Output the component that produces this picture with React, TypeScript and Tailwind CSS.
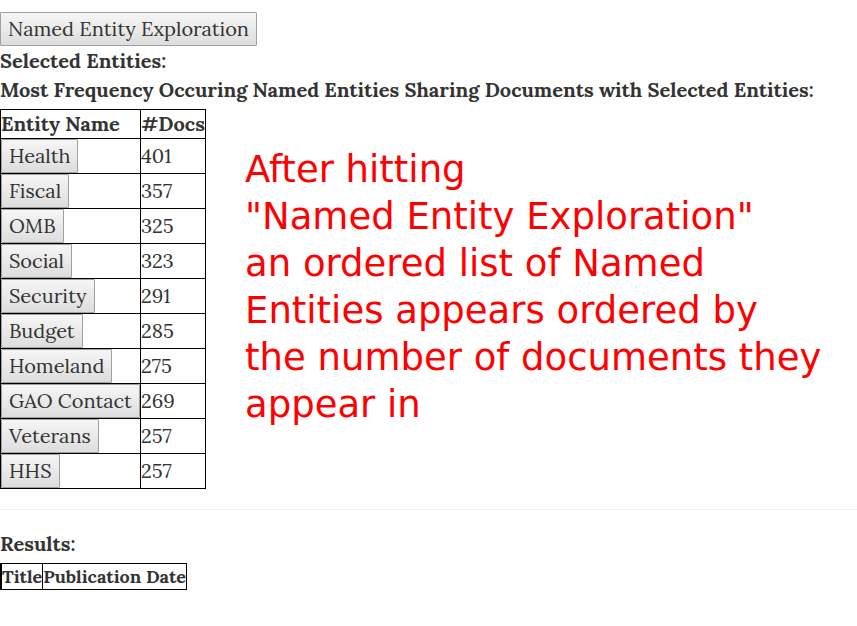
import React from "react";

const entities: [string, number][] = [
  ["Health", 401],
  ["Fiscal", 357],
  ["OMB", 325],
  ["Social", 323],
  ["Security", 291],
  ["Budget", 285],
  ["Homeland", 275],
  ["GAO Contact", 269],
  ["Veterans", 257],
  ["HHS", 257],
];

const buttonStyle =
  "block h-[34px] rounded-[1px] border border-[#a0a0a0] bg-linear-to-b from-[#f6f6f6] to-[#dddddd] px-[7px] pb-0.5 text-[#333333]";

export default function App() {
  return (
    <main className="min-h-screen bg-white pt-3 font-[Lora,'Noto_Serif','DejaVu_Serif','Liberation_Serif',serif] text-[20px] leading-[29px] text-[#333333]">
      <button type="button" className={buttonStyle}>
        Named Entity Exploration
      </button>
      <h2 className="font-bold">Selected Entities:</h2>
      <h2 className="font-bold">
        Most Frequency Occuring Named Entities Sharing Documents with Selected Entities:
      </h2>
      <div className="mt-[5px] flex items-start">
        <table className="w-[206px] border-collapse">
          <thead className="leading-[28px]">
            <tr>
              <th className="border border-black p-0 text-left">Entity Name</th>
              <th className="border border-black p-0 text-left">#Docs</th>
            </tr>
          </thead>
          <tbody>
            {entities.map(([name, count]) => (
              <tr key={name}>
                <td className="border border-black p-0">
                  <button type="button" className={buttonStyle}>
                    {name}
                  </button>
                </td>
                <td className="border border-black p-0 pb-0.5">{count}</td>
              </tr>
            ))}
          </tbody>
        </table>
        <p className="ml-[39px] mt-[37px] font-['DejaVu_Sans',sans-serif] text-[37px] leading-[47px] text-[#ff0000]">
          After hitting
          <br />
          "Named Entity Exploration"
          <br />
          an ordered list of Named
          <br />
          Entities appears ordered by
          <br />
          the number of documents they
          <br />
          appear in
        </p>
      </div>
      <hr className="mt-5 mb-[19px] border-[#eeeeee]" />
      <h2 className="font-bold">Results:</h2>
      <table className="mt-[5px] border-collapse text-[18px] leading-[25px]">
        <thead>
          <tr>
            <th className="border border-l-2 border-black p-0">Title</th>
            <th className="border border-black p-0">Publication Date</th>
          </tr>
        </thead>
      </table>
    </main>
  );
}
